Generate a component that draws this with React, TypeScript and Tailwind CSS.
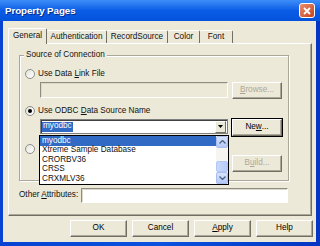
import type { FC, ReactNode } from "react";

const btnBase =
  "flex items-center justify-center h-[17px] bg-[#ece9d8] border border-t-white border-l-white border-r-[#716f64] border-b-[#716f64] shadow-[inset_-1px_-1px_0_#aca899]";

const Button: FC<{ w?: string; disabled?: boolean; focus?: boolean; children: ReactNode }> = ({
  w = "w-[57px]",
  disabled,
  focus,
  children,
}) => (
  <div className={`${w} ${focus ? "outline outline-1 outline-[#000]" : ""}`}>
    <div className={`${btnBase} ${disabled ? "text-[#aca899]" : "text-black"}`}>{children}</div>
  </div>
);

const Radio: FC<{ checked?: boolean; children?: ReactNode }> = ({ checked, children }) => (
  <div className="flex items-center h-[12px] pl-[5px] gap-[3px]">
    <div className="w-[10px] h-[10px] rounded-full border border-[#8e8e8e] bg-gradient-to-br from-[#e4e4dc] to-white flex items-center justify-center">
      {checked && <div className="w-[4px] h-[4px] rounded-full bg-black" />}
    </div>
    {children && <span>{children}</span>}
  </div>
);

const sunken =
  "border border-t-[#8e8d84] border-l-[#8e8d84] border-r-white border-b-white shadow-[inset_1px_1px_0_#ddd9c8]";

const ScrollArrow: FC<{ up?: boolean }> = ({ up }) => (
  <div className="w-[12px] h-[12px] rounded-[2px] bg-gradient-to-b from-[#d8e4fd] to-[#b4c8f6] border border-[#a9bdf0] flex items-center justify-center">
    <svg width="7" height="4" viewBox="0 0 7 4">
      <path
        d={up ? "M0.5 3.5 L3.5 0.5 L6.5 3.5" : "M0.5 0.5 L3.5 3.5 L6.5 0.5"}
        fill="none"
        stroke="#4d6185"
        strokeWidth="1.3"
      />
    </svg>
  </div>
);

const items = ["myodbc", "Xtreme Sample Database", "CRORBV36", "CRSS", "CRXMLV36"];

export default function App() {
  return (
    <div className="w-[320px] h-[246px] flex flex-col bg-gradient-to-r from-[#0843d1] via-[#0a52e0] to-[#0436c2] overflow-hidden font-['Liberation_Sans',Arial,sans-serif] text-[8.2px] leading-none text-[#111]">
      {/* title bar */}
      <div className="h-[21px] flex items-center justify-between pl-[5px] pr-[5px] bg-gradient-to-b from-[#3d8ef8] via-[#0a5ce6] to-[#0452dc]">
        <span className="text-white font-bold text-[9.8px] tracking-[-0.1px] [text-shadow:1px_1px_0_#0a2a8a]">
          Property Pages
        </span>
        <div className="w-[16px] h-[15px] rounded-[3px] border border-white bg-gradient-to-br from-[#e98d6e] to-[#c4401a] flex items-center justify-center">
          <svg width="8" height="8" viewBox="0 0 8 8">
            <path d="M1 1 L7 7 M7 1 L1 7" stroke="#fff" strokeWidth="1.8" />
          </svg>
        </div>
      </div>

      {/* body */}
      <div className="flex-1 flex flex-col ml-[3px] mr-[4px] mb-[4px] bg-[#ece9d8]">
        {/* tabs */}
        <div className="flex items-end pt-[7px] pl-[5px] h-[22px]">
          <div className="relative z-10 -mb-px w-[39px] h-[16px] bg-[#ece9d8] border border-b-0 border-t-white border-l-white border-r-[#716f64] rounded-t-[2px] flex items-center justify-center pb-[1px]">
            General
          </div>
          {[
            ["Authentication", "w-[60px]"],
            ["RecordSource", "w-[61px]"],
            ["Color", "w-[32px]"],
            ["Font", "w-[33px]"],
          ].map(([t, w]) => (
            <div
              key={t}
              className={`${w} h-[13px] bg-[#ece9d8] border-t border-t-white border-r border-r-[#716f64] rounded-t-[2px] flex items-center justify-center pt-[1px]`}
            >
              {t}
            </div>
          ))}
        </div>

        {/* panel */}
        <div className="ml-[5px] w-[304px] h-[173px] border border-t-white border-l-white border-r-[#716f64] border-b-[#716f64] shadow-[inset_-1px_-1px_0_#aca899] flex flex-col">
          {/* group box */}
          <div className="relative mt-[11px] ml-[10px] w-[270px] h-[126px] border border-[#aca899] shadow-[inset_1px_1px_0_#fff,1px_1px_0_#fff] flex flex-col">
            <div className="absolute -top-[5px] left-[4px] px-[2px] bg-[#ece9d8]">Source of Connection</div>

            <div className="mt-[12px]">
              <Radio>
                Use Data <u className="underline-offset-1">L</u>ink File
              </Radio>
            </div>
            <div className="flex mt-[2px] ml-[20px] gap-[4px]">
              <div className={`w-[188px] h-[16px] bg-[#ece9d8] ${sunken}`} />
              <Button w="w-[50px]" disabled>
                <u className="underline-offset-1">B</u>rowse...
              </Button>
            </div>

            <div className="mt-[6px]">
              <Radio checked>
                Use ODBC <u className="underline-offset-1">D</u>ata Source Name
              </Radio>
            </div>
            <div className="flex items-start mt-[2px] ml-[20px] gap-[4px]">
              <div className="relative z-20">
                <div className="w-[188px] h-[15px] bg-white border border-[#7f7f7f] shadow-[inset_1px_1px_0_#404040] flex items-center pl-[1px] pr-[1px]">
                  <span className="bg-[#316ac5] text-white px-[1px] h-[10px] flex items-center">myodbc</span>
                  <div className="ml-auto w-[11px] h-[12px] bg-[#ece9d8] border border-t-white border-l-white border-r-[#716f64] border-b-[#716f64] flex items-center justify-center">
                    <svg width="5" height="3" viewBox="0 0 5 3">
                      <path d="M0 0 H5 L2.5 3 Z" fill="#000" />
                    </svg>
                  </div>
                </div>
                {/* open dropdown list */}
                <div className="absolute top-[16px] -left-[1px] w-[190px] h-[50px] bg-white border border-black flex">
                  <div className="flex-1 flex flex-col">
                    {items.map((it, i) => (
                      <div
                        key={it}
                        className={`h-[10px] flex items-center pl-[2px] ${
                          i === 0 ? "bg-[#316ac5] text-white" : ""
                        }`}
                      >
                        {it}
                      </div>
                    ))}
                  </div>
                  <div className="w-[12px] flex flex-col bg-[#f6f5f0]">
                    <ScrollArrow up />
                    <div className="flex-1" />
                    <div className="h-[11px] rounded-[2px] bg-gradient-to-r from-[#c9d8fc] to-[#b6cbf8] border border-[#b3c7f5]" />
                    <ScrollArrow />
                  </div>
                </div>
              </div>
              <Button w="w-[50px]" focus>
                Ne<u className="underline-offset-1">w</u>...
              </Button>
            </div>

            <div className="mt-[7px]">
              <Radio />
            </div>
            <div className="ml-[212px]">
              <Button w="w-[50px]" disabled>
                B<u className="underline-offset-1">u</u>ild...
              </Button>
            </div>
          </div>

          {/* other attributes */}
          <div className="flex items-center mt-[7px] ml-[10px]">
            <span className="w-[62px]">
              Other <u className="underline-offset-1">A</u>ttributes:
            </span>
            <div className={`w-[207px] h-[15px] bg-white ${sunken}`} />
          </div>
        </div>

        {/* dialog buttons */}
        <div className="flex mt-[4px] ml-[67px] gap-[5px]">
          <Button>OK</Button>
          <Button>Cancel</Button>
          <Button>
            <u className="underline-offset-1">A</u>pply
          </Button>
          <Button>Help</Button>
        </div>
      </div>
    </div>
  );
}
